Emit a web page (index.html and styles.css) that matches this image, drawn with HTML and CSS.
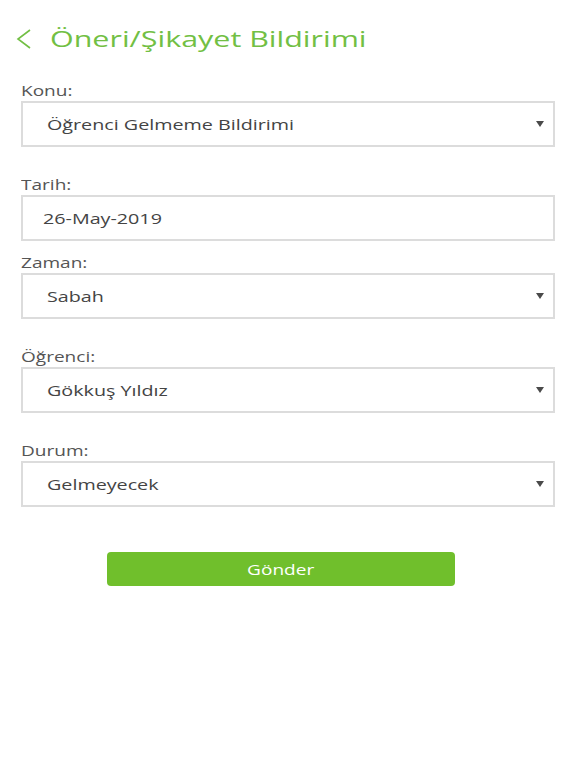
FILE: index.html
```html
<!DOCTYPE html>
<html lang="tr">
<head>
  <meta charset="UTF-8" />
  <meta name="viewport" content="width=device-width, initial-scale=1.0"/>
  <title>Öneri/Şikayet Bildirimi</title>
  <link rel="stylesheet" href="styles.css">
</head>
<body>
  <div class="header">
    <svg class="back" width="16" height="20" viewBox="0 0 16 20">
      <polyline points="14,1 2,10 14,19" fill="none" stroke="#72bf44" stroke-width="1.6" />
    </svg>
    <h1 class="title"><span class="wide">Öneri/Şikayet Bildirimi</span></h1>
  </div>

  <form class="form" onsubmit="event.preventDefault();">
    <div class="field">
      <label><span class="wide">Konu:</span></label>
      <div class="box select"><span class="wide">Öğrenci Gelmeme Bildirimi</span><span class="caret"></span></div>
    </div>

    <div class="field compact">
      <label><span class="wide">Tarih:</span></label>
      <div class="box date"><span class="wide">26-May-2019</span></div>
    </div>

    <div class="field">
      <label><span class="wide">Zaman:</span></label>
      <div class="box select"><span class="wide">Sabah</span><span class="caret"></span></div>
    </div>

    <div class="field">
      <label><span class="wide">Öğrenci:</span></label>
      <div class="box select"><span class="wide">Gökkuş Yıldız</span><span class="caret"></span></div>
    </div>

    <div class="field">
      <label><span class="wide">Durum:</span></label>
      <div class="box select"><span class="wide">Gelmeyecek</span><span class="caret"></span></div>
    </div>

    <button type="submit" class="btn"><span class="wide center">Gönder</span></button>
  </form>
</body>
</html>
```

FILE: styles.css
```css
/* Estilos gerais */
body {
  font-family: "Open Sans", "DejaVu Sans", sans-serif;
  background-color: #fff;
  color: #444;
  margin: 0;
}

/* texto largo (captura esticada na horizontal) */
.wide {
  display: inline-block;
  transform: scaleX(1.36);
  transform-origin: left center;
  white-space: nowrap;
}

.wide.center {
  transform-origin: center center;
}

/* Cabeçalho */
.header {
  display: flex;
  align-items: center;
  padding: 24px 0 0 16px;
}

.back {
  display: block;
  margin-right: 18px;
}

.title {
  margin: 0;
  font-size: 22.4px;
  font-weight: normal;
  line-height: 30px;
  color: #72bf44;
}

/* Formulário */
.form {
  margin-top: 27px;
  padding: 0 21px;
}

.field {
  margin-bottom: 28px;
}

.field.compact {
  margin-bottom: 12px;
}

label {
  display: block;
  font-size: 14px;
  line-height: 20px;
  color: #555;
}

.box {
  position: relative;
  box-sizing: border-box;
  height: 46px;
  border: 2px solid #dcdcdc;
  padding: 2px 0 0 24px;
  font-size: 14.5px;
  line-height: 40px;
  color: #444;
}

.box.date {
  padding-left: 20px;
}

.caret {
  position: absolute;
  right: 9px;
  top: 18px;
  width: 0;
  height: 0;
  border-left: 4px solid transparent;
  border-right: 4px solid transparent;
  border-top: 6px solid #4a4a4a;
}

button.btn {
  display: block;
  width: 348px;
  height: 34px;
  margin: 45px 0 0 86px;
  padding: 0;
  background-color: #70bf2c;
  color: #fff;
  border: none;
  border-radius: 4px;
  font-family: inherit;
  font-size: 14px;
  cursor: pointer;
}
```
